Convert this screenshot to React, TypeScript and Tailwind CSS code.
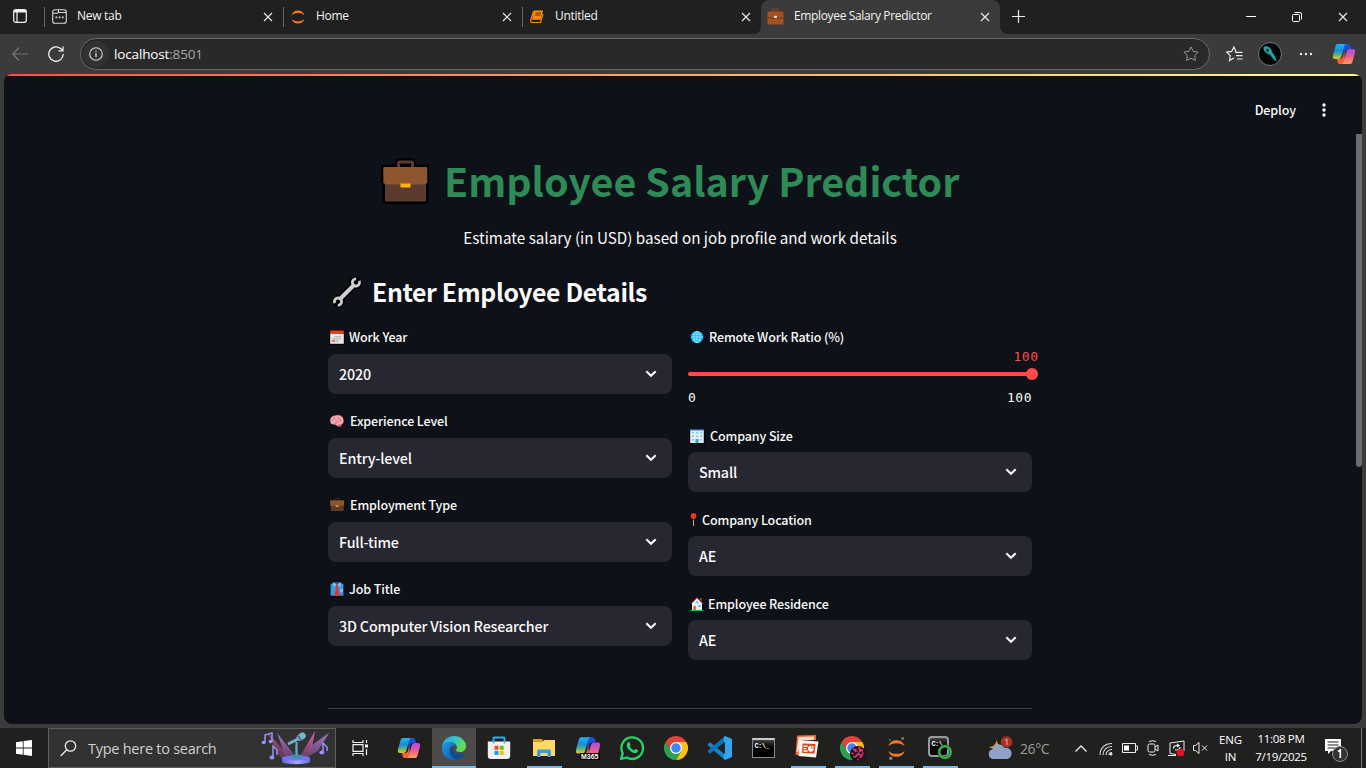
import React, { useId } from "react";

const SANS = "font-['Noto_Sans_CJK_SC',sans-serif]";
const UI = "font-['Open_Sans','Noto_Sans',sans-serif]";

function Close({ className = "" }: { className?: string }) {
  return (
    <svg className={className} width="10" height="10" viewBox="0 0 10 10" stroke="#e6e6e6" strokeWidth="1.2" fill="none">
      <path d="M1 1l8 8M9 1l-8 8" />
    </svg>
  );
}

function Briefcase({ size, outline = 1.6 }: { size: number; outline?: number }) {
  return (
    <svg width={size} height={size} viewBox="0 0 50 50" className="shrink-0">
      <g stroke="#000" strokeWidth={outline * 3} strokeLinejoin="round" fill="#000">
        <path d="M17.500 10V5.500q0-1.500 1.500-1.500h13q1.500 0 1.500 1.500V10M3.500 10h43v16h-43zM5 26h41v18.500H5z" />
      </g>
      <path d="M18.500 10.500V6q0-1 1-1h12q1 0 1 1v4.500" fill="none" stroke="#5d3a2e" strokeWidth="3" />
      <path d="M5 24h41v19.500q0 1-1 1H6q-1 0-1-1z" fill="#5d3a2e" />
      <path d="M3.300 11q0-1 1-1h42q1 0 1 1v14.500l-2 2H5.300l-2-2z" fill="#8e562e" />
      <path d="M20.500 26.500h10v4h-10z" fill="#fcb400" />
    </svg>
  );
}

function Wrench() {
  return (
    <svg width="32" height="32" viewBox="0 0 32 32" className="mt-px shrink-0">
      <g fill="none" stroke="#000" strokeWidth="7" strokeLinecap="round" strokeLinejoin="round">
        <path d="M9 23L23 9" />
        <path d="M5 26.500a3 3 0 1 1 2.500 1.500M27 5.500A3 3 0 1 1 24.500 4" />
      </g>
      <path d="M8.500 23.500L23.500 8.500" stroke="#cdcdcd" strokeWidth="4" />
      <g fill="none" stroke="#cdcdcd" strokeWidth="2.800">
        <path d="M3.800 27.200A3.600 3.600 0 1 1 6.800 29.200" />
        <path d="M28.200 4.800A3.600 3.600 0 1 1 25.200 2.800" />
      </g>
    </svg>
  );
}

type LabelIcon = "calendar" | "brain" | "case" | "tie" | "globe" | "office" | "pin" | "home";

function Emoji({ name }: { name: LabelIcon }) {
  if (name === "case") return <Briefcase size={16} outline={1} />;
  if (name === "pin")
    return (
      <svg width="8" height="16" viewBox="0 0 8 16" className="shrink-0">
        <path d="M4.500 7v7" stroke="#000" strokeWidth="3" />
        <path d="M4.500 7v7" stroke="#aeb1b5" strokeWidth="1.200" />
        <circle cx="4.500" cy="4" r="3.500" fill="#000" />
        <circle cx="4.500" cy="4" r="2.900" fill="#f03a17" />
      </svg>
    );
  return (
    <svg width="16" height="16" viewBox="0 0 16 16" className="shrink-0">
      {name === "calendar" && (
        <>
          <path d="M.5 1h15v14.500H.5z" fill="#000" />
          <path d="M1.200 4.500h13.600v10.300H1.200z" fill="#e9e9e9" />
          <path d="M1.200 1.500h13.600v3H1.200z" fill="#f03a17" />
          <path d="M5.500 7.500h7M3.500 9.800h9M3.500 12h6.500M5.500 7v6M8 7v6M10.500 7v4" stroke="#b4b6b8" strokeWidth=".8" />
          <path d="M3 10.800h2.500v2H3z" fill="#f0694f" />
        </>
      )}
      {name === "brain" && (
        <>
          <path d="M1 9c-1-4 2-7 6-7 5-1 8 2 8 6 0 3-2 3-3 5-2 2-4 0-6-1-3 0-5-1-5-3z" fill="#f6a5b5" stroke="#000" strokeWidth=".7" />
          <path d="M3 8c1-3 3-2 4-1s3-1 2-3M5 11c1-2 3-1 4-2s3-2 4 0M10 5l2 2M4 4l2 1" stroke="#d4728a" fill="none" strokeWidth=".9" />
          <path d="M9 12l4-1-1 2.500-2 .5z" fill="#d94a66" />
        </>
      )}
      {name === "tie" && (
        <>
          <path d="M1.200 3L5 1h6l3.800 2v12H1.200z" fill="#3c95dd" stroke="#000" strokeWidth=".6" />
          <path d="M5 1h6l-3 2.500z" fill="#1b5b9d" />
          <path d="M4 1.300L7.500 4 4.500 6zM12 1.300L8.500 4l3 2z" fill="#8cc6f4" />
          <path d="M7 3.500h2l-.2 2 1.700 9.500h-5l1.700-9.500z" fill="#e8321b" />
          <path d="M11 8h3v3h-3z" fill="#78b9ee" />
        </>
      )}
      {name === "globe" && (
        <>
          <circle cx="8" cy="8" r="7" fill="#000" />
          <circle cx="8" cy="8" r="6.300" fill="#19b1ee" />
          <path d="M2.500 8h11M3.700 5.200h8.600M3.700 10.800h8.600M8 2.500v11" stroke="#a5e6ff" strokeWidth=".8" />
          <ellipse cx="8" cy="8" rx="3" ry="5.700" fill="none" stroke="#a5e6ff" strokeWidth=".8" />
        </>
      )}
      {name === "office" && (
        <>
          <path d="M.5.800h15V15.500H.5z" fill="#000" />
          <path d="M1.200 2h13.600v13H1.200z" fill="#e6ecef" />
          <path d="M1 1.200h14v1.300H1z" fill="#2f74bd" />
          <path d="M3 4h1.800v1.600H3zM7.100 4h1.800v1.600H7.100zM11.200 4H13v1.600h-1.800zM3 7.500h1.800v1.600H3zM11.200 7.500H13v1.600h-1.800zM7.100 7.500h1.800v1.600H7.100zM3 11h1.800v1.600H3zM11.200 11H13v1.600h-1.800z" fill="#62cdf3" />
          <path d="M6.400 11h3.200v4H6.400z" fill="#38a4e0" />
        </>
      )}
      {name === "home" && (
        <>
          <path d="M8 1.500l5.500 6V14.500h-11v-7z" fill="#eef0f2" stroke="#000" strokeWidth="1" />
          <path d="M2.300 7.500L8 1.800l5.700 5.700" fill="none" stroke="#e0604c" strokeWidth="1" />
          <path d="M11 2h1.600v3.500L11 4z" fill="#b93a28" />
          <path d="M6.700 5.500h2.600v1.800H6.700zM9.500 9h2.200v2.200H9.500z" fill="#50c4f0" />
          <path d="M4.700 10h2v4h-2z" fill="#e2452b" />
          <path d="M1.500 13.900h13V15h-13z" fill="#18b83a" />
        </>
      )}
    </svg>
  );
}

function Label({ icon, text, fit, raised = false }: { icon: LabelIcon; text: string; fit: string; raised?: boolean }) {
  return (
    <div className={`flex h-6 items-center pl-[1px] text-[12.500px] leading-6 font-medium tracking-[-0.120px] text-[#fafafa] ${SANS} ${raised ? "-mt-px mb-[5px]" : "mb-1"}`}>
      <Emoji name={icon} />
      <span className={`whitespace-nowrap ${fit}`}>{text}</span>
    </div>
  );
}

function Select({ icon, label, value, fit = "ml-1", raised = false }: { icon: LabelIcon; label: string; value: string; fit?: string; raised?: boolean }) {
  return (
    <div className="mb-4">
      <Label icon={icon} text={label} fit={fit} raised={raised} />
      <div className="flex h-10 items-center justify-between rounded-lg bg-[#262730] pr-[15px] pl-[11px]">
        <span className={`text-[14.300px] leading-6 font-medium tracking-[-0.170px] text-[#fafafa] ${SANS}`}>{value}</span>
        <svg width="12" height="8" viewBox="0 0 12 8" fill="none" stroke="#fafafa" strokeWidth="2.100">
          <path d="M1.300 1.300L6 5.800l4.700-4.500" />
        </svg>
      </div>
    </div>
  );
}

function Copilot({ size = 24 }: { size?: number }) {
  const id = useId();
  return (
    <svg width={size} height={size} viewBox="0 0 24 24">
      <defs>
        <linearGradient id={id + "a"} x1="0" y1="0" x2="0" y2="1">
          <stop offset="0" stopColor="#1fb4f4" /><stop offset=".45" stopColor="#168fd8" /><stop offset=".75" stopColor="#65b973" /><stop offset="1" stopColor="#f3cb20" />
        </linearGradient>
        <linearGradient id={id + "b"} x1="0" y1="0" x2="0" y2="1">
          <stop offset="0" stopColor="#a44dec" /><stop offset=".5" stopColor="#ef5a94" /><stop offset="1" stopColor="#ffa05b" />
        </linearGradient>
      </defs>
      <path d="M11 2h5c1.600 0 2 .8 2.400 2.300L19 7h-3c-2 0-2.600 1-3.200 3l-1.200 4z" fill="#1d4fd7" />
      <path d="M6 2h9c-2 0-2.500 1.200-3 3L9.500 14c-.5 2-1.500 3-3.500 3H3c-2 0-2.500-1.500-2-3.500L3.300 5C3.800 3 4.500 2 6 2z" fill={`url(#${id}a)`} />
      <path d="M13 22H8c-1.600 0-2-.8-2.400-2.300L5 17h3c2 0 2.600-1 3.200-3l1.200-4z" fill="#f4603b" />
      <path d="M18 22H9c2 0 2.500-1.200 3-3l2.500-9c.5-2 1.500-3 3.500-3h3c2 0 2.500 1.500 2 3.500L20.700 19c-.5 2-1.200 3-2.700 3z" fill={`url(#${id}b)`} />
    </svg>
  );
}

function Edge() {
  return (
    <svg width="26" height="26" viewBox="0 0 26 26">
      <defs>
        <linearGradient id="edgeTop" x1="0" y1="0" x2="1" y2=".4">
          <stop offset="0" stopColor="#1c9ee0" /><stop offset=".5" stopColor="#30c4d3" /><stop offset="1" stopColor="#67dc50" />
        </linearGradient>
        <linearGradient id="edgeLow" x1="0" y1="0" x2="1" y2="1">
          <stop offset="0" stopColor="#1f9be4" /><stop offset="1" stopColor="#0a5ab4" />
        </linearGradient>
      </defs>
      <path d="M1 13C1 6 6 1 13 1s12 5 12 10c0 4-3 6-6 6-2.500 0-4-.8-4-1.700 0-.8 1-1 1-2.800C16 9.500 13 7 9.500 7 5 7 1.500 10 1 13z" fill="url(#edgeTop)" />
      <path d="M1 13.500C1 9.500 5 7 9 7c3 0 5 1.200 5.800 3C10.500 9.500 8 13 8.500 16.500 9 21 12.500 24 16 24.500 8 26.500 1 21 1 13.500z" fill="url(#edgeLow)" />
      <path d="M11.500 11C8.500 13 8 17 10.500 20.500c2 2.800 5 4 7 3.500 2.500-.8 5-2.700 6.300-5 .3-.6-.3-.8-.8-.5-3 1.500-7.500 1-9.700-1.500-1.500-1.800-1.800-3.800-1.800-6z" fill="#0d4f97" />
    </svg>
  );
}

function Store() {
  return (
    <svg width="24" height="24" viewBox="0 0 24 24">
      <path d="M6.500 7V2.500q0-1 1-1h9q1 0 1 1V7" fill="none" stroke="#28b3ec" strokeWidth="1.900" />
      <path d="M.8 5.500h22.400V20q0 3-3 3H3.800q-3 0-3-3z" fill="#f1f1f1" />
      <path d="M6.500 5V7.500M17.500 5V7.500" stroke="#28b3ec" strokeWidth="1.600" />
      <path d="M7.500 9.800h4v4h-4z" fill="#f25022" /><path d="M12.700 9.800h4v4h-4z" fill="#7fba00" />
      <path d="M7.500 14.900h4v4h-4z" fill="#00a4ef" /><path d="M12.700 14.900h4v4h-4z" fill="#ffb900" />
    </svg>
  );
}

function Explorer() {
  return (
    <svg width="24" height="24" viewBox="0 0 24 24">
      <path d="M1 3h9l2 2.500h-11z" fill="#e0a10c" />
      <path d="M1 5.500L11 5.500 12.500 4H23v16H1z" fill="#ffd766" />
      <path d="M5 21v-6q0-1.500 1.500-1.500h11q1.500 0 1.500 1.500v6h-3.500v-4h-7v4z" fill="#3f9bdc" />
    </svg>
  );
}

function WhatsApp() {
  return (
    <svg width="26" height="26" viewBox="0 0 26 26">
      <path d="M2 24l1.700-5.800A10.800 10.800 0 1 1 7.900 22.500z" fill="none" stroke="#25d366" strokeWidth="2.300" strokeLinejoin="round" />
      <path d="M9.200 7.300c.6-.5 1.300-.3 1.500.2l.9 2.200c.1.400-.8 1.300-.9 1.600.9 1.900 2.300 3.200 4.300 4 .4-.1 1.200-1.500 1.600-1.400l2.300 1.100c.5.300.2 1.600-.4 2.200-1.200 1.100-2.800 1.200-4.800.3-2.600-1.100-4.700-3.300-5.800-5.700-.6-1.700-.1-3.500 1.300-4.500z" fill="#25d366" />
    </svg>
  );
}

function Chrome({ badge = false }: { badge?: boolean }) {
  return (
    <svg width="26" height="26" viewBox="0 0 26 26" overflow="visible">
      <path d="M13 7h10.400A12 12 0 0 1 13 25l5.200-9z" fill="#fbc116" />
      <path d="M2.600 7A12 12 0 0 1 23.400 7H13L7.800 16z" fill="#e2433b" />
      <path d="M2.600 7a12 12 0 0 0 10.400 18l5.200-9H7.800z" fill="#2ba24c" />
      <circle cx="13" cy="13" r="6" fill="#f5f6f8" />
      <circle cx="13" cy="13" r="4.700" fill="#4385f4" />
      {badge && (
        <>
          <circle cx="19" cy="19" r="8" fill="#1c1019" />
          <path d="M14 14l3 1-1 2M20 12l1 4 3-1M16 22l3-3 4 1-2 3M12.500 18l2 1" stroke="#f02a72" strokeWidth="1.900" fill="none" />
          <path d="M18 16l2 2M14 21l2 2" stroke="#24a49c" />
          <path d="M23 17l2 2M18 24l2 1" stroke="#c5215a" strokeWidth="1.500" />
        </>
      )}
    </svg>
  );
}

function VSCode() {
  return (
    <svg width="26" height="26" viewBox="0 0 26 26">
      <path d="M1 9l2-1.800 15 12.300V25L1.200 10.800q-.8-.9-.2-1.800z" fill="#1684c9" />
      <path d="M1 17l2 1.800L18 7V1L1.200 15.200q-.8.900-.2 1.800z" fill="#1071b7" />
      <path d="M18 1l7 3v18l-7 3-1-1V2z" fill="#31a6ee" />
      <path d="M18 7l-7 6 7 6z" fill="#20201f" />
    </svg>
  );
}

function Cmd({ ring = false }: { ring?: boolean }) {
  return (
    <span className={`relative block ${ring ? "h-[21px] w-[21px] -translate-x-[2px] -translate-y-[2px]" : "h-[20px] w-[23px] -translate-x-px"}`}>
      <span className={`block h-full w-full border bg-gradient-to-b from-[#454545] to-black to-60% ${ring ? "rounded-[4px] border-2 border-[#999]" : "border-[#898989] border-t-[#ccc] border-t-2"}`}>
        <span className="block pt-0.5 pl-0.5 font-['Liberation_Mono',monospace] text-[7px] leading-[8px] font-bold tracking-[-0.600px] text-white">
          {ring ? "C:\\" : "C:\\_"}
        </span>
      </span>
      {ring && (
        <svg className="absolute top-[8px] left-[9px]" width="16" height="16" viewBox="0 0 16 16">
          <circle cx="8" cy="8" r="5.800" fill="none" stroke="#193e20" strokeWidth="3.400" />
          <circle cx="8" cy="8" r="5.800" fill="none" stroke="#3daf4a" strokeWidth="2.200" />
        </svg>
      )}
    </span>
  );
}

function PowerPoint() {
  return (
    <svg className="-translate-x-px -translate-y-px" width="26" height="26" viewBox="0 0 26 26">
      <path d="M3 1.500L22 1v5H7L5 21H1.500z" fill="#f0693a" />
      <path d="M4.500 3L20 2.500V6H7L4 18H2.500z" fill="#fbd9c9" />
      <path d="M5.500 6L24.500 7.500 22 23.500 4.500 22z" fill="#fff4ee" />
      <path d="M8.500 9.500L21.500 10l-1 9.500-12.500-.5z" fill="#dc461c" />
      <path d="M9.500 11.500h4V13h-4zM9.500 14H12v1.300H9.500zM9.500 16.300h4v1.400h-4z" fill="#fff" />
      <circle cx="16.800" cy="14.800" r="2.500" fill="#fff" stroke="#fff" strokeWidth="1" />
      <path d="M17 14.500V11.500h3.500v3z" fill="#dc461c" /><path d="M17.700 13.800v-2.300q2 .2 2.300 2.300z" fill="#fff" />
    </svg>
  );
}

function Jupyter({ size = 24, moons = false }: { size?: number; moons?: boolean }) {
  return (
    <svg width={size} height={size} viewBox="0 0 24 24">
      <path d="M3.500 9.500C4.700 5.500 7.700 3.300 12 3.300s7.300 2.200 8.500 6.200C18 7.300 15.300 6.500 12 6.500S6 7.300 3.500 9.500z" fill="#f37726" />
      <path d="M3.500 14.500c1.200 4 4.200 6.200 8.500 6.200s7.300-2.200 8.500-6.200c-2.500 2.200-5.200 3-8.500 3s-6-.8-8.500-3z" fill="#f37726" />
      {moons && (
        <>
          <circle cx="18.500" cy="1.600" r="1.500" fill="#777" /><circle cx="6" cy="22.200" r="1.700" fill="#888" /><circle cx="5" cy="3" r=".9" fill="#777" />
        </>
      )}
    </svg>
  );
}

function Feature() {
  return (
    <svg width="69" height="34" viewBox="0 0 69 34">
      <defs>
        <linearGradient id="beamA" x1="0" y1="0" x2="0" y2="1"><stop offset="0" stopColor="#b077d3" /><stop offset="1" stopColor="#7a4b86" stopOpacity=".6" /></linearGradient>
        <linearGradient id="beamB" x1="0" y1="0" x2="0" y2="1"><stop offset="0" stopColor="#f062c0" /><stop offset="1" stopColor="#8d4678" stopOpacity=".6" /></linearGradient>
        <linearGradient id="base" x1="0" x2="1"><stop offset="0" stopColor="#5f61e8" /><stop offset=".55" stopColor="#a9a5ff" /><stop offset="1" stopColor="#686aef" /></linearGradient>
      </defs>
      <path d="M7 2l20 22 6 4-14-2z" fill="url(#beamB)" opacity=".7" />
      <path d="M16 2l16 20 1 6-9-4z" fill="url(#beamA)" />
      <path d="M54 0l-3 16-7 11h-6z" fill="url(#beamB)" />
      <path d="M68 2L57 20l-14 8 8-14z" fill="url(#beamA)" />
      <path d="M21 27v3.500c0 3.500 28 3.500 28 0V27z" fill="url(#base)" />
      <ellipse cx="35" cy="27" rx="14" ry="2.500" fill="#7674f4" />
      <ellipse cx="35.500" cy="25.500" rx="7" ry="2" fill="#428db1" />
      <path d="M35.500 24V11" stroke="#5dabc8" strokeWidth="2.300" />
      <path d="M27 13l12-6" stroke="#71afd0" strokeWidth="3" />
      <path d="M39 6.500l2.500-1.700" stroke="#7fb0c9" strokeWidth="6.500" strokeLinecap="round" />
      <path d="M36.800 4.500l3.600 5" stroke="#315f7c" strokeWidth="1.300" />
      <g fill="#9695fb" stroke="#9695fb" strokeWidth="1.500">
        <path d="M4 11V4l7-2v8" fill="none" /><ellipse cx="2.700" cy="11.500" rx="1.300" ry=".9" /><ellipse cx="9.700" cy="10.500" rx="1.300" ry=".9" />
        <path d="M12 26V15l4 4v5" fill="none" /><ellipse cx="11" cy="26.500" rx="1.700" ry="1.300" />
        <path d="M62 21v-9l4 4v4" fill="none" /><ellipse cx="60.800" cy="21.500" rx="1.700" ry="1.300" />
      </g>
    </svg>
  );
}

const STAR = "M8 .9l2.200 4.500 4.900.7-3.500 3.500.8 4.900L8 12.200l-4.400 2.300.8-4.900L.9 6.100l4.900-.7z";

function Tab({ icon, title, active = false, fit }: { icon: React.ReactNode; title: string; active?: boolean; fit: string }) {
  return (
    <div className={`relative flex h-[34px] w-[239px] items-center pr-[10px] pl-[6px] ${active ? "rounded-t-lg bg-[#3b3b3b]" : ""}`}>
      {!active && <span className="absolute top-[7px] left-0 h-5 w-px bg-[#686868]" />}
      <span className="flex w-[18px] justify-center">{icon}</span>
      <span className={`-mt-[2px] ml-[9px] flex-1 text-[12px] leading-5 whitespace-nowrap text-[#f2f2f2] ${fit}`}>{title}</span>
      <Close className="-mt-px" />
    </div>
  );
}

function Task({ children, active = false, running = false, width = "w-11" }: { children: React.ReactNode; active?: boolean; running?: boolean; width?: string }) {
  return (
    <div className={`relative flex h-10 items-center justify-center ${width} ${active ? "bg-[#4c4b4a]" : ""}`}>
      {children}
      {(active || running) && <span className={`absolute bottom-0 h-0.5 bg-[#76b9ed] ${active ? "w-full" : "w-[35px]"}`} />}
    </div>
  );
}

export default function App() {
  return (
    <div className={`flex h-[768px] w-[1366px] flex-col overflow-hidden bg-[#3b3b3b] ${UI}`}>
      <header className="flex h-[34px] items-center bg-[#202020]">
        <div className="-mt-0.5 flex w-11 justify-center pr-1">
          <svg width="14" height="14" viewBox="0 0 14 14" fill="none" stroke="#f0f0f0" strokeWidth="1.200">
            <rect x=".7" y=".7" width="12.600" height="12.600" rx="2" />
            <path d="M4 3v10M1 2.500h12" strokeWidth="1.200" /><path d="M1 2.200h12" strokeWidth="2.600" />
          </svg>
        </div>
        <Tab title="New tab" fit="tracking-[-0.280px]" icon={
          <svg className="-mt-px" width="15" height="15" viewBox="0 0 15 15" fill="none" stroke="#d8d8d8" strokeWidth="1.100">
            <path d="M3 .7h9q2.300 0 2.300 2.300v9q0 2.300-2.300 2.300H3Q.7 14.300.7 12V3Q.7.7 3 .7zM1 4.200h4.500l1-1.200V1M7 3.500h7" />
            <path d="M3.500 8.300h1.700M6.700 8.300h1.700M9.900 8.300h1.700" strokeWidth="1.700" />
          </svg>} />
        <Tab title="Home" fit="tracking-[-0.280px]" icon={<Jupyter size={20} />} />
        <Tab title="Untitled" fit="tracking-[-0.280px]" icon={
          <svg width="14" height="14" viewBox="0 0 14 14" fill="#ff8b0b">
            <path d="M4 .5h9L10.500 9.800H2z" /><path d="M3.500 1L.8 10.200q-.5 2.300 1.700 2.300h8L13 4" fill="none" stroke="#ff8b0b" strokeWidth="1.200" />
            <path d="M5.500 3h5.500M5 5h5.500" stroke="#3a2716" strokeWidth=".9" />
          </svg>} />
        <div className="relative">
          <span className="absolute bottom-0 -left-2 h-2 w-2 bg-[radial-gradient(circle_at_0_0,#202020_8px,#3b3b3b_8px)]" />
          <Tab active title="Employee Salary Predictor" fit="tracking-[-0.350px]" icon={
            <svg className="-mt-[2px] -ml-px" width="17" height="17" viewBox="0 0 17 17">
              <path d="M5.500 4V1.300h6V4" fill="none" stroke="#8a421c" strokeWidth="1.300" />
              <rect x=".5" y="3.500" width="16" height="13" rx="1.200" fill="#a5501f" />
              <path d="M.5 10h16" stroke="#75351a" strokeWidth="1.200" /><path d="M7 7.800h3V10H7z" fill="#d9d9d9" />
            </svg>} />
          <span className="absolute -right-2 bottom-0 h-2 w-2 bg-[radial-gradient(circle_at_100%_0,#202020_8px,#3b3b3b_8px)]" />
        </div>
        <svg className="-mt-0.5 ml-3" width="13" height="13" viewBox="0 0 13 13" stroke="#eee" strokeWidth="1.200"><path d="M6.500 0v13M0 6.500h13" /></svg>
        <div className="ml-auto flex items-center pr-[18px]">
          <svg width="10" height="10" viewBox="0 0 10 10" stroke="#fff"><path d="M0 4.500h10" /></svg>
          <svg className="ml-9" width="10" height="10" viewBox="0 0 10 10" fill="none" stroke="#fff"><rect x=".5" y="2.500" width="7" height="7" rx="1" /><path d="M2.500.5H8q1.500 0 1.500 1.500v5.500" /></svg>
          <Close className="ml-9" />
        </div>
      </header>

      <div className="flex h-10 items-center pl-3">
        <svg width="16" height="14" viewBox="0 0 16 14" fill="none" stroke="#777" strokeWidth="1.200"><path d="M16 7H.8M7 .5L.8 7 7 13.500" /></svg>
        <svg className="ml-5" width="16" height="16" viewBox="0 0 16 16" fill="none" stroke="#ececec" strokeWidth="1.300"><path d="M15.200 8A7.200 7.200 0 1 1 12.600 2.500L14.800 4.500M15 .5v4.300h-4.500" /></svg>
        <div className="ml-4 flex h-8 w-[1130px] items-center rounded-full border border-[#686868] bg-[#292929] pr-[10px] pl-[2px]">
          <span className="flex h-[26px] w-[26px] items-center justify-center rounded-full bg-[#323232]">
            <svg width="14" height="14" viewBox="0 0 14 14" fill="none" stroke="#d8d8d8" strokeWidth="1.100"><circle cx="7" cy="7" r="6.300" /><path d="M7 6v4.300M7 3.500v1.300" strokeWidth="1.300" /></svg>
          </span>
          <span className="ml-[5px] text-[13.500px] tracking-[-0.150px] text-white">localhost<span className="text-[#a5a5a5]">:8501</span></span>
          <svg className="ml-auto" width="16" height="16" viewBox="0 0 16 16" fill="none" stroke="#969696"><path d={STAR} /></svg>
        </div>
        <svg className="ml-4" width="17" height="16" viewBox="0 0 17 16" fill="none" stroke="#ececec" strokeWidth="1.200"><path d="M10 5.500L7.900 1 5.700 5.400.8 6.100l3.500 3.500-.8 4.900L8 12M9 6.300h7.500M10 9.600h6.500M11 13h5.500" /></svg>
        <svg className="ml-[15px]" width="24" height="24" viewBox="0 0 24 24">
          <circle cx="12" cy="12" r="11.500" fill="#020606" stroke="#777" />
          <path d="M5.500 5c3-2 8 .5 8.500 5 2 3 4 5 4.500 9.500-2.500-1.500-5-4.500-6.500-7-4-.5-7-4-6.500-7.500z" fill="#22a3a6" /><ellipse cx="9.500" cy="8.300" rx="1.300" ry="1.700" transform="rotate(-40 9.500 8.300)" fill="#07242f" />
        </svg>
        <svg className="ml-[17px]" width="14" height="4" viewBox="0 0 14 4" fill="#eee"><circle cx="2" cy="2" r="1.200" /><circle cx="7" cy="2" r="1.200" /><circle cx="12" cy="2" r="1.200" /></svg>
        <span className="ml-[19px]"><Copilot /></span>
      </div>

      <main className="relative mx-1 h-[650px] overflow-hidden rounded-lg bg-[#0e1117]">
        <div className="h-0.5 bg-gradient-to-r from-[#ff4b4b] to-[#fffd80]" />
        <div className="flex h-[58px] items-start justify-end pt-[22px] pr-[36px]">
          <span className={`text-[12.500px] leading-6 font-medium tracking-[-0.080px] text-[#fafafa] ${SANS}`}>Deploy</span>
          <svg className="mt-[5px] ml-[26px]" width="4" height="14" viewBox="0 0 4 14" fill="#fafafa"><circle cx="2" cy="2" r="1.700" /><circle cx="2" cy="7" r="1.700" /><circle cx="2" cy="12" r="1.700" /></svg>
        </div>
        <span className="absolute top-[60px] right-0 h-[333px] w-1.5 rounded-b bg-[#6b6c70]" />
        <div className="ml-[324px] flex w-[704px] flex-col">
          <div className="flex h-[79px] items-center pt-[17px] pl-[52px]">
            <Briefcase size={50} />
            <h1 className={`-mt-[5px] ml-[14px] text-[39.400px] leading-[50px] font-bold whitespace-nowrap text-[#2e8b57] ${SANS}`}>Employee Salary Predictor</h1>
          </div>
          <p className={`mt-[12px] text-center text-[15.230px] leading-6 text-[#fafafa] ${SANS}`}>Estimate salary (in USD) based on job profile and work details</p>
          <div className="mt-[24px] flex h-9 items-center pl-[3px]">
            <Wrench />
            <h2 className={`ml-[9px] text-[24.800px] leading-9 font-bold tracking-[-0.350px] whitespace-nowrap text-[#fafafa] ${SANS}`}>Enter Employee Details</h2>
          </div>
          <div className="mt-[17px] grid grid-cols-2 gap-4">
            <div className="flex flex-col">
              <Select raised icon="calendar" label="Work Year" value="2020" />
              <Select raised icon="brain" label="Experience Level" value="Entry-level" fit="ml-[5px]" />
              <Select raised icon="case" label="Employment Type" value="Full-time" fit="ml-[5px]" />
              <Select raised icon="tie" label="Job Title" value="3D Computer Vision Researcher" />
            </div>
            <div className="flex flex-col">
              <div className="flex h-[98px] flex-col font-['DejaVu_Sans_Mono',monospace] text-[13px] tracking-[0.500px]">
                <Label raised icon="globe" text="Remote Work Ratio (%)" fit="ml-1" />
                <div className="-mt-[5px] -mr-[6.500px] text-right leading-4 text-[#ff4b4b]">100</div>
                <div className="mt-[7px] flex h-1 shrink-0 items-center justify-end rounded-full bg-[#ff4b4b]"><span className="-mr-1.5 h-3 w-3 shrink-0 rounded-full bg-[#ff4b4b]" /></div>
                <div className="mt-[14px] flex justify-between leading-4 text-[#fafafa]"><span>0</span><span>100</span></div>
              </div>
              <Select icon="office" label="Company Size" value="Small" fit="ml-[5px]" />
              <Select icon="pin" label="Company Location" value="AE" fit="ml-[5px]" />
              <Select icon="home" label="Employee Residence" value="AE" fit="ml-[3px]" />
            </div>
          </div>
          <hr className="mt-[32px] border-[#3d3f45]" />
        </div>
      </main>

      <footer className="mt-1 flex h-10 items-center bg-[#20201f]">
        <div className="flex w-12 justify-center">
          <svg width="16" height="16" viewBox="0 0 16 16" fill="#fff"><path d="M0 2.200l6.800-1v6.300H0zM7.600 1.100L16 0v7.500H7.600zM0 8.400h6.800v6.300L0 13.800zM7.600 8.400H16V16l-8.400-1.200z" /></svg>
        </div>
        <div className="flex h-10 w-[288px] items-center border border-[#5e5e5e] bg-[#323232] pr-[5px] pl-[11px]">
          <svg width="17" height="17" viewBox="0 0 17 17" fill="none" stroke="#eee" strokeWidth="1.300"><circle cx="10.500" cy="6" r="5.200" /><path d="M6.800 9.800L.7 16" /></svg>
          <span className="mt-0.5 ml-[11px] text-[14.500px] tracking-[-0.260px] text-[#cfcfcf]">Type here to search</span>
          <span className="ml-auto"><Feature /></span>
        </div>
        <div className="flex w-[51px] justify-center pr-[3px]">
          <svg width="17" height="16" viewBox="0 0 17 16" fill="none" stroke="#f0f0f0" strokeWidth="1.200"><path d="M1 0v2.500h10V0M1 16v-2.500h10V16M1 4.700h10v6.600H1zM14.500 0v3M14.500 9v6" /><path d="M13 4.500h3v3h-3z" fill="#fff" stroke="none" /></svg>
        </div>
        <Task width="w-[45px] pr-px"><Copilot /></Task>
        <Task active><Edge /></Task>
        <Task width="w-[46px] pr-px"><Store /></Task>
        <Task running><Explorer /></Task>
        <Task>
          <Copilot size={26} />
          <span className="absolute top-[25px] left-[14px] bg-black px-px font-['Liberation_Sans',sans-serif] text-[7px] leading-[7px] font-bold text-white">M365</span>
        </Task>
        <Task><WhatsApp /></Task>
        <Task><Chrome /></Task>
        <Task><VSCode /></Task>
        <Task><Cmd /></Task>
        <Task running><PowerPoint /></Task>
        <Task running><Chrome badge /></Task>
        <Task running><Jupyter size={23} moons /></Task>
        <Task running><Cmd ring /></Task>
        <div className="ml-auto flex items-center">
          <svg width="26" height="24" viewBox="0 0 26 24">
            <path d="M9 1c-1 5 1 9 7 9-3 4-11 4-15 1 5 0 8-4 8-10z" fill="#d9983a" />
            <path d="M5 23a5 5 0 0 1-.5-9.800A6.500 6.500 0 0 1 16.500 12 5.500 5.500 0 0 1 19.500 23z" fill="#8fa2c6" />
            <circle cx="18.500" cy="6" r="5.800" fill="#a93226" /><path d="M17 4.500l2-1.500v6" fill="none" stroke="#d8b4ad" />
          </svg>
          <span className="ml-[6px] w-[36px] text-[14px] tracking-[-0.400px] text-[#9d9d9d]">26°C</span>
          <svg className="ml-[19px]" width="12" height="7" viewBox="0 0 12 7" fill="none" stroke="#eee" strokeWidth="1.300"><path d="M.5 6.500L6 1l5.500 5.500" /></svg>
          <svg className="mt-0.5 ml-[12px]" width="14" height="14" viewBox="0 0 14 14" fill="none" stroke="#ddd" strokeWidth="1.100"><path d="M1 13C1 6 6 1.500 13 1.500M4 13c0-5 3.500-8.500 9-8.500M7 13c0-3 2.500-5.500 6-5.500M10 13c0-1.500 1-2.500 3-2.500" /><circle cx="12" cy="12" r="1" fill="#fff" /></svg>
          <svg className="ml-[9px]" width="16" height="10" viewBox="0 0 16 10" fill="none" stroke="#eee"><path d="M.5.5h13v9H.5zM14 3h1.500v4H14" /><path d="M2 2.500h5v5H2z" fill="#fff" stroke="none" /></svg>
          <svg className="ml-[9px]" width="12" height="16" viewBox="0 0 12 16" fill="none" stroke="#eee"><rect x="1" y="4" width="7" height="8" rx="1.500" /><path d="M8 7l3-2v6L8 9M2 1.500q4-1.500 7 0M2 14.500q4 1.500 7 0" /></svg>
          <svg className="ml-[9px]" width="17" height="17" viewBox="0 0 17 17" fill="none" stroke="#eee"><path d="M8 14.500l-6-1V3l14-2v10M0 15.500h8" /><path d="M5.500 8.500q0-3 3-3h2M9 4l2 1.500L9 7M12 7q0 3-3 3H7" strokeWidth="1.200" /><circle cx="12.500" cy="12.500" r="3.800" fill="#e81123" stroke="none" /></svg>
          <svg className="ml-[8px]" width="15" height="14" viewBox="0 0 15 14" fill="none" stroke="#eee"><path d="M.5 4.500h2L6 1.500v11L2.500 9.500h-2zM9 4.500l5 5M14 4.500l-5 5" /></svg>
          <div className="ml-[10px] flex w-[25px] flex-col items-center text-[11.500px] leading-[17px] tracking-[-0.200px] text-white"><span>ENG</span><span>IN</span></div>
          <div className="ml-[11px] flex w-[54px] flex-col items-center text-[11.500px] leading-[18px] tracking-[-0.350px] whitespace-nowrap text-white"><span>11:08 PM</span><span>7/19/2025</span></div>
          <svg className="mt-1 ml-[16px]" width="25" height="25" viewBox="0 0 25 25">
            <path d="M1 1h16v12H7l-3 3v-3H1z" fill="#fff" /><path d="M3.500 4h11M3.500 7h11M3.500 10h8" stroke="#20201f" strokeWidth="1.200" />
            <circle cx="16" cy="16" r="7.500" fill="#343433" stroke="#8b8b8b" /><path d="M14 13.500l2.300-1.500v8" fill="none" stroke="#fff" strokeWidth="1.600" />
          </svg>
          <span className="ml-[12px] h-10 w-[5px] border-l border-[#777]" />
        </div>
      </footer>
    </div>
  );
}
